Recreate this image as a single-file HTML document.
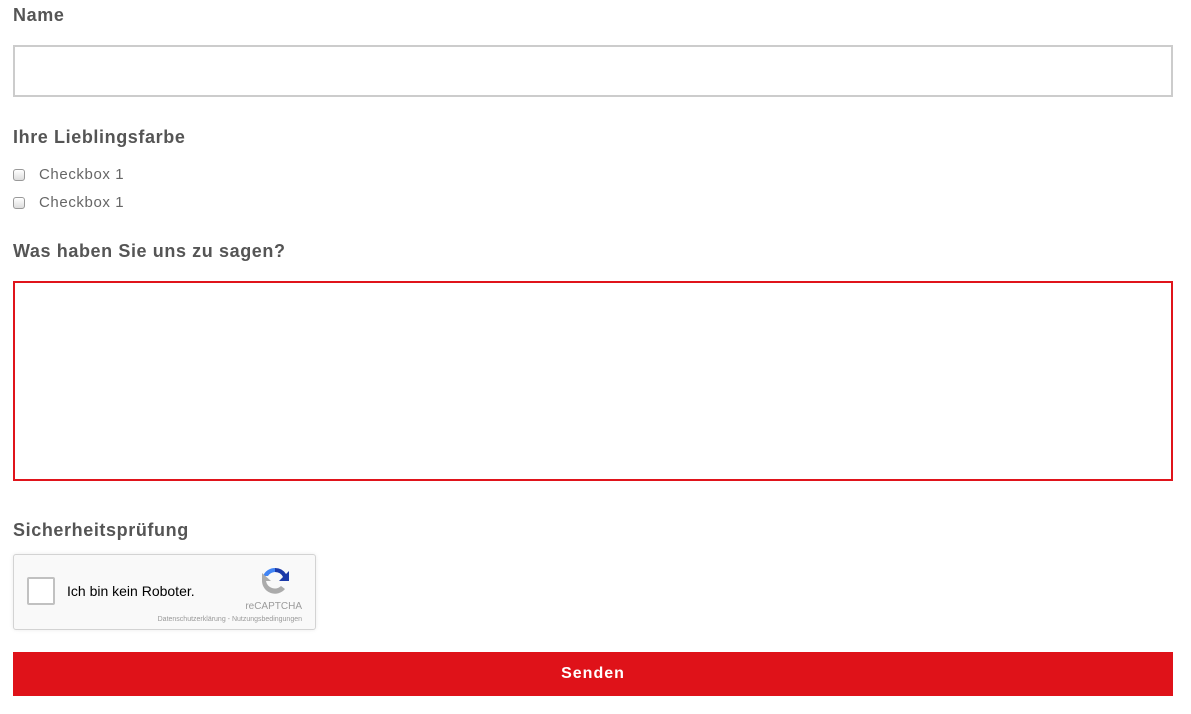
<!DOCTYPE html>
<html><head><meta charset="utf-8"><style>
*{box-sizing:border-box;margin:0;padding:0}
body{width:1191px;height:714px;background:#fff;font-family:"Liberation Sans",sans-serif;color:#555;position:relative;overflow:hidden}
.lbl{position:absolute;left:13px;font-size:18px;font-weight:bold;color:#555;letter-spacing:0.6px}
.box{position:absolute;left:13px;width:1160px;background:#fff}
.cb{position:absolute;left:13px;width:12px;height:12px;border:1px solid #999;border-radius:3px;background:linear-gradient(#fff,#ddd)}
.ct{position:absolute;left:39px;font-size:15px;color:#666;letter-spacing:0.6px}
</style></head><body>
<div class="lbl" style="top:5px">Name</div>
<div class="box" style="top:45px;height:52px;border:2px solid #ccc"></div>
<div class="lbl" style="top:127px">Ihre Lieblingsfarbe</div>
<div class="cb" style="top:169px"></div><div class="ct" style="top:166px">Checkbox 1</div>
<div class="cb" style="top:197px"></div><div class="ct" style="top:194px">Checkbox 1</div>
<div class="lbl" style="top:241px">Was haben Sie uns zu sagen?</div>
<div class="box" style="top:281px;height:200px;border:2px solid #e0141b"></div>
<div class="lbl" style="top:520px">Sicherheitsprüfung</div>
<div style="position:absolute;left:13px;top:554px;width:303px;height:76px;background:#f9f9f9;border:1px solid #d3d3d3;border-radius:3px;box-shadow:0 0 4px rgba(0,0,0,.08)">
<div style="position:absolute;left:13px;top:22px;width:28px;height:28px;background:#fff;border:2px solid #c1c1c1;border-radius:2px"></div>
<div style="position:absolute;left:53px;top:28px;font-size:14px;color:#000">Ich bin kein Roboter.</div>
<svg style="position:absolute;left:245px;top:10px" width="32" height="32" viewBox="0 0 32 32"><path d="M16 3a13 13 0 0 1 11 6l3-3v10H20l4-4a9 9 0 0 0-8-5z" fill="#1c3aa9"/><path d="M16 3a13 13 0 0 0-12 8h5a9 9 0 0 1 7-4z" fill="#4285f4"/><path d="M3 16a13 13 0 0 0 23 8l-4-3a9 9 0 0 1-15-5H12L3 8z" fill="#ababab"/></svg>
<div style="position:absolute;right:13px;top:46px;font-size:10px;color:#9b9b9b">reCAPTCHA</div>
<div style="position:absolute;right:13px;top:61px;font-size:7px;color:#999">Datenschutzerklärung - Nutzungsbedingungen</div>
</div>
<div style="position:absolute;left:13px;top:652px;width:1160px;height:44px;background:#df1219;color:#fff;font-weight:bold;font-size:16px;letter-spacing:1px;text-align:center;line-height:44px">Senden</div>
</body></html>
